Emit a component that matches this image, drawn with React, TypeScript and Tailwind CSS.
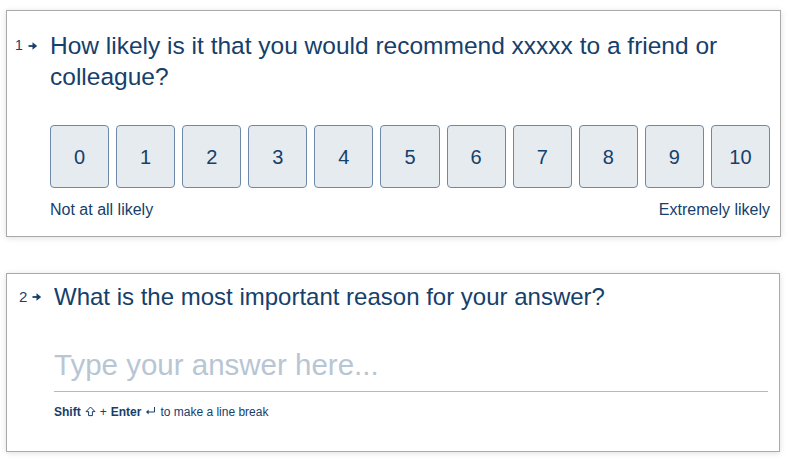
import React from "react";

const navy = "text-[#15406b]";

function Arrow() {
  return (
    <svg width="10" height="10" viewBox="0 0 10 10" className="inline-block">
      <path d="M0.5 5 H6.5" stroke="#15406b" strokeWidth="1.8" />
      <path d="M4.5 1.3 L9.2 5 L4.5 8.7 Z" fill="#15406b" />
    </svg>
  );
}

function ShiftIcon() {
  return (
    <svg width="11" height="11" viewBox="0 0 11 11" className="inline-block mx-[4px] -mt-[2px]">
      <path d="M5.5 1 L10 5.6 H7.4 V9.6 H3.6 V5.6 H1 Z" fill="none" stroke="#15406b" strokeWidth="1" />
    </svg>
  );
}

function EnterIcon() {
  return (
    <svg width="11" height="10" viewBox="0 0 11 10" className="inline-block mx-[4px] -mt-[3px]">
      <path d="M9.5 1 V6 H2" fill="none" stroke="#15406b" strokeWidth="1" />
      <path d="M1 6 L3.6 3.6 V8.4 Z" fill="#15406b" />
    </svg>
  );
}

export default function App() {
  const scores = [0, 1, 2, 3, 4, 5, 6, 7, 8, 9, 10];

  return (
    <div
      className={`w-[791px] h-[461px] bg-white overflow-hidden ${navy}`}
      style={{ fontFamily: '"Liberation Sans", Arial, sans-serif' }}
    >
      <div className="pt-[10px] pl-[6px]">
        {/* question 1 */}
        <section className="w-[775px] border border-[#a9a9a9] bg-white shadow-[0_1px_6px_rgba(0,0,0,0.13)] flex pt-[19px] pb-[16px]">
          <div className="w-[43px] shrink-0 pl-[8px] flex items-center gap-[5px] h-[31px] text-[14px]">
            <span>1</span>
            <Arrow />
          </div>
          <div className="w-[720px]">
            <h2 className="text-[24.5px] leading-[31px]">
              How likely is it that you would recommend xxxxx to a friend or colleague?
            </h2>
            <div className="mt-[33px] flex gap-[7px]">
              {scores.map((n) => (
                <button
                  key={n}
                  className="flex-1 h-[63px] rounded-[4px] border border-[#6d89a7] bg-[#e6ebf0] text-[20px] flex items-center justify-center"
                >
                  {n}
                </button>
              ))}
            </div>
            <div className="mt-[12px] flex justify-between text-[16px] leading-[20px]">
              <span>Not at all likely</span>
              <span>Extremely likely</span>
            </div>
          </div>
        </section>

        {/* question 2 */}
        <section className="mt-[36px] w-[774px] h-[179px] border border-[#a9a9a9] bg-white shadow-[0_1px_6px_rgba(0,0,0,0.13)] flex pt-[9px]">
          <div className="w-[47px] shrink-0 pl-[12px] flex items-center gap-[5px] h-[28px] text-[15px]">
            <span>2</span>
            <Arrow />
          </div>
          <div className="w-[714px]">
            <h2 className="text-[24px] leading-[28px]">What is the most important reason for your answer?</h2>
            <div className="mt-[36px] border-b border-[#a9bdcf] pb-[8px]">
              <div className="text-[29.5px] leading-[36px] text-[#b8c6d4]">Type your answer here...</div>
            </div>
            <div className="mt-[12px] text-[12px] leading-[16px] flex items-center">
              <b>Shift</b>
              <ShiftIcon />
              <span>+</span>
              <b className="ml-[4px]">Enter</b>
              <EnterIcon />
              <span>to make a line break</span>
            </div>
          </div>
        </section>
      </div>
    </div>
  );
}
